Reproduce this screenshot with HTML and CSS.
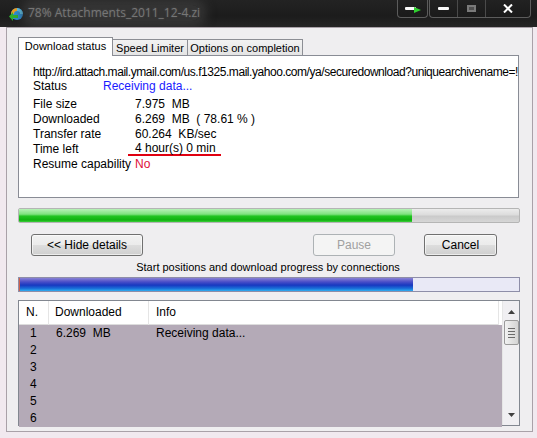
FILE: index.html
```html
<!DOCTYPE html>
<html>
<head>
<meta charset="utf-8">
<link rel="stylesheet" href="styles.css">
</head>
<body>
<div class="window">
  <div class="titlebar">
    <svg class="app-icon" width="16" height="16" viewBox="0 0 16 16">
      <circle cx="9" cy="8" r="6" fill="#2a8fd8"/>
      <path d="M3 8 A6 6 0 0 1 9 2 L9 5 A3 3 0 0 0 6 8 Z" fill="#f0a020"/>
      <path d="M9 2 A6 6 0 0 1 15 8 L12 8 A3 3 0 0 0 9 5 Z" fill="#5cc8f0"/>
      <path d="M1 9 L6 9 L6 6 L10 10.5 L6 15 L6 12 L1 12 Z" fill="#30b030" transform="rotate(180 5.5 10.5)"/>
    </svg>
    <span class="title">78% Attachments_2011_12-4.zi</span>
    <div class="caps">
      <div class="capgroup tray">
        <span class="dash"></span>
        <svg class="tray-arrow" width="7" height="6" viewBox="0 0 7 6"><path d="M0 0 L7 3 L0 6 Z" fill="#2fd02f"/></svg>
      </div>
      <div class="capgroup main">
        <div class="cap min"><span class="dash"></span></div>
        <div class="cap max"><span class="box"></span></div>
        <div class="cap close">
          <svg width="10" height="9" viewBox="0 0 10 9"><path d="M1 0.5 L9 8.5 M9 0.5 L1 8.5" stroke="#fff" stroke-width="2"/></svg>
        </div>
      </div>
    </div>
  </div>
  <div class="frame">
    <div class="client">
      <div class="tabs">
        <div class="tab active">Download status</div>
        <div class="tab speed">Speed Limiter</div>
        <div class="tab options">Options on completion</div>
      </div>
      <div class="panel">
        <div class="url">http://ird.attach.mail.ymail.com/us.f1325.mail.yahoo.com/ya/securedownload?uniquearchivename=!</div>
        <div class="status-row"><span class="status-label">Status</span><span class="blue">Receiving data...</span></div>
        <div class="details">
          <div class="row"><span class="label">File size</span><span>7.975&nbsp; MB</span></div>
          <div class="row"><span class="label">Downloaded</span><span>6.269&nbsp; MB&nbsp; ( 78.61 % )</span></div>
          <div class="row"><span class="label">Transfer rate</span><span>60.264&nbsp; KB/sec</span></div>
          <div class="row"><span class="label">Time left</span><span class="mark">4 hour(s) 0 min</span></div>
          <div class="row"><span class="label">Resume capability</span><span class="red">No</span></div>
        </div>
      </div>
      <div class="bar green"><div class="fill" style="width:78.6%"></div></div>
      <div class="buttons">
        <div class="btn hide">&lt;&lt; Hide details</div>
        <div class="btn pause disabled">Pause</div>
        <div class="btn cancel">Cancel</div>
      </div>
      <div class="conn-label">Start positions and download progress by connections</div>
      <div class="bar blue-bar"><div class="fill" style="width:78.8%"></div></div>
      <div class="list">
        <div class="list-main">
          <div class="list-head">
            <div class="c-n">N.</div>
            <div class="c-d">Downloaded</div>
            <div class="c-i">Info</div>
          </div>
          <div class="list-body">
            <div class="lrow"><div class="c-n">1</div><div class="c-d">6.269&nbsp; MB</div><div class="c-i">Receiving data...</div></div>
            <div class="lrow"><div class="c-n">2</div><div class="c-d"></div><div class="c-i"></div></div>
            <div class="lrow"><div class="c-n">3</div><div class="c-d"></div><div class="c-i"></div></div>
            <div class="lrow"><div class="c-n">4</div><div class="c-d"></div><div class="c-i"></div></div>
            <div class="lrow"><div class="c-n">5</div><div class="c-d"></div><div class="c-i"></div></div>
            <div class="lrow"><div class="c-n">6</div><div class="c-d"></div><div class="c-i"></div></div>
          </div>
        </div>
        <div class="scrollbar">
          <div class="arrow up"><svg width="7" height="4" viewBox="0 0 7 4"><path d="M0 4 L3.5 0 L7 4 Z" fill="#404040"/></svg></div>
          <div class="thumb"><span></span><span></span><span></span><span></span></div>
          <div class="track"></div>
          <div class="arrow down"><svg width="7" height="4" viewBox="0 0 7 4"><path d="M0 0 L3.5 4 L7 0 Z" fill="#404040"/></svg></div>
        </div>
      </div>
    </div>
  </div>
</div>
</body>
</html>
```

FILE: styles.css
```css
* { box-sizing: border-box; }
html, body { margin: 0; padding: 0; }
body {
  width: 537px;
  height: 438px;
  overflow: hidden;
  background: #1b1b1b;
  font-family: "Liberation Sans", Arial, sans-serif;
  font-size: 11px;
  color: #000;
}
.window { width: 537px; height: 438px; display: flex; flex-direction: column; }

/* title bar */
.titlebar {
  height: 27px;
  flex: none;
  display: flex;
  align-items: flex-start;
  background: linear-gradient(#232323, #1c1c1c 60%, #252525);
}
.app-icon { margin: 6px 0 0 8px; flex: none; }
.title {
  margin: 5px 0 0 4px;
  font-family: "Open Sans", "Liberation Sans", sans-serif;
  font-size: 12px;
  color: #767676;
  background: rgba(60,60,60,0.7);
  box-shadow: 0 0 10px 7px rgba(60,60,60,0.7);
  border-radius: 8px;
  line-height: 16px;
  height: 16px;
  text-shadow: 0 0 2px #555;
}
.caps { margin-left: auto; display: flex; gap: 1px; margin-right: 6px; }
.capgroup {
  height: 18px;
  border: 1px solid #5c5c5c;
  border-top: none;
  border-radius: 0 0 4px 4px;
  display: flex;
  background: linear-gradient(#222, #1a1a1a);
}
.capgroup.tray { width: 31px; align-items: center; justify-content: center; }
.dash { display: block; width: 11px; height: 3px; background: #fafafa; border-radius: 1px; }
.tray-arrow { margin-left: -2px; margin-top: 3px; }
.capgroup.main { width: 102px; }
.cap { display: flex; align-items: center; justify-content: center; height: 100%; }
.cap.min { width: 28px; border-right: 1px solid #4a4a4a; }
.cap.max { width: 28px; border-right: 1px solid #4a4a4a; }
.cap.close { flex: 1; }
.box { display: block; width: 9px; height: 7px; border: 2px solid #7a7a7a; background: #505050; }

/* frame */
.frame {
  flex: 1;
  min-height: 0;
  background: #f1e9ef;
  padding: 0 4px 6px 6px;
  display: flex;
}
.client {
  flex: 1;
  min-width: 0;
  border: 1px solid #a9a1a8;
  background: #efeef0;
  padding: 9px 12px 0 11px;
  display: flex;
  flex-direction: column;
}

/* tabs */
.tabs {
  height: 19px;
  flex: none;
  display: flex;
  align-items: flex-end;
  position: relative;
  z-index: 1;
  margin-bottom: -1px;
}
.tab {
  height: 16px;
  margin-bottom: 1px;
  border: 1px solid #8c8e94;
  border-bottom: none;
  border-left: none;
  background: linear-gradient(#f2f2f2, #e4e4e4);
  line-height: 16px;
  font-size: 11px;
  white-space: nowrap;
  text-align: center;
}
.tab.active {
  width: 95px;
  height: 19px;
  margin-bottom: 0;
  border-left: 1px solid #8c8e94;
  background: #fff;
  line-height: 17px;
}
.tab.speed { width: 75px; }
.tab.options { width: 115px; }

.panel {
  height: 143px;
  flex: none;
  min-width: 0;
  overflow: hidden;
  margin-right: 1px;
  border: 1px solid #898c95;
  background: #fff;
  padding: 9px 0 0 14px;
  font-size: 12px;
}
.url { line-height: 14px; white-space: nowrap; letter-spacing: -0.45px; }
.status-row { line-height: 14px; display: flex; }
.status-label { width: 70px; }
.blue { color: #1a1aff; }
.red { color: #e0103a; }
.details { margin-top: 4px; }
.row { display: flex; line-height: 15px; }
.label { width: 102px; }
.mark {
  margin-left: -7px;
  padding: 0 5px 0 7px;
  border-bottom: 2px solid #e00010;
  height: 14px;
  line-height: 13px;
}

/* progress bars */
.bar {
  height: 15px;
  flex: none;
  border: 1px solid #b5b5b5;
  border-radius: 2px;
  background: linear-gradient(#ececec, #dcdcdc 45%, #cacaca 55%, #d6d6d6);
  overflow: hidden;
}
.bar .fill { height: 100%; }
.green { margin-top: 10px; }
.green .fill {
  background: linear-gradient(#b8f2b8, #7ee27e 40%, #22c422 55%, #0fb20f 85%, #3fcf3f);
}
.blue-bar {
  margin-top: 3px;
  border-color: #8e8ea8;
  border-radius: 0;
  background: #e9e9f6;
}
.blue-bar .fill {
  border-left: 1px solid #d0604a;
  background: linear-gradient(#8a82d4, #4a4ec8 30%, #1838c0 55%, #1a6ed8 80%, #2eaef0);
}

/* buttons */
.buttons { display: flex; margin-top: 11px; height: 22px; flex: none; }
.btn {
  height: 22px;
  border: 1px solid #707070;
  border-radius: 3px;
  background: linear-gradient(#f2f2f2, #ebebeb 50%, #dddddd 51%, #cfcfcf);
  display: flex;
  align-items: center;
  justify-content: center;
  font-size: 12px;
  box-shadow: inset 0 0 0 1px rgba(255,255,255,0.6);
}
.btn.hide { width: 112px; margin-left: 13px; }
.btn.pause { width: 82px; margin-left: auto; }
.btn.cancel { width: 73px; margin-left: 29px; margin-right: 23px; }
.btn.disabled { color: #a0a0a0; border-color: #adb2b5; background: #f4f4f4; box-shadow: none; }

.conn-label {
  margin-top: 4px;
  line-height: 14px;
  height: 14px;
  flex: none;
  text-align: center;
  padding-right: 2px;
  font-size: 11px;
}

/* list */
.list {
  margin-top: 8px;
  height: 126px;
  flex: none;
  border: 1px solid #828790;
  display: flex;
  background: #fff;
}
.list-main { flex: 1; display: flex; flex-direction: column; min-width: 0; }
.list-head {
  height: 24px;
  display: flex;
  align-items: center;
  background: #fff;
  border-bottom: 1px solid #ddd;
  margin-right: 3px;
  font-size: 12px;
}
.list-head > div { height: 24px; line-height: 22px; border-right: 1px solid #e5e5e5; }
.c-n { width: 30px; padding-left: 7px; flex: none; }
.c-d { width: 100px; padding-left: 6px; flex: none; }
.c-i { flex: 1; padding-left: 7px; }
.list-body { flex: 1; background: #b4aab7; }
.lrow { display: flex; height: 17px; line-height: 17px; font-size: 12px; }
.lrow .c-n { padding-left: 11px; }
.lrow .c-d { padding-left: 7px; }

.scrollbar {
  width: 17px;
  flex: none;
  background: #f0eff2;
  border-left: 1px solid #e6e6e6;
  display: flex;
  flex-direction: column;
  align-items: center;
}
.arrow { height: 17px; width: 100%; display: flex; align-items: center; justify-content: center; }
.arrow.up { margin-top: 2px; }
.thumb {
  width: 15px;
  height: 25px;
  border: 1px solid #9a9a9a;
  border-radius: 2px;
  background: linear-gradient(90deg, #f2f2f2, #e2e2e2 50%, #d4d4d4);
  display: flex;
  flex-direction: column;
  align-items: center;
  justify-content: center;
  gap: 2px;
}
.thumb span { display: block; width: 7px; height: 1px; background: #6a6a6a; }
.track { flex: 1; }
.arrow.down { margin-bottom: 2px; }
```
